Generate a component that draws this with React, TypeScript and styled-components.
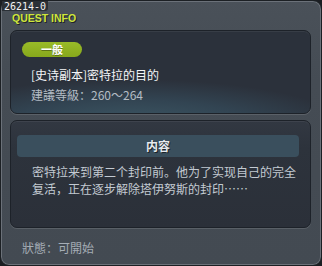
import * as React from 'react';
import styled, { createGlobalStyle } from 'styled-components';

const GlobalStyle = createGlobalStyle`
  html, body {
    margin: 0;
    padding: 0;
    background: #1b1e22;
  }
`;

const cjk = `"Noto Sans CJK SC", "Noto Sans CJK TC", "Noto Sans", sans-serif`;

const Frame = styled.div`
  position: relative;
  box-sizing: border-box;
  width: 322px;
  height: 266px;
  padding: 11px 10px 0 9px;
  display: flex;
  flex-direction: column;
  border: 1px solid #1c2024;
  border-radius: 9px;
  background: linear-gradient(180deg, #4a5159 0%, #454c54 30%, #434a52 100%);
  box-shadow: inset 0 0 0 1px #6b7179;
  font-family: ${cjk};
`;

const QuestId = styled.div`
  position: absolute;
  left: 1px;
  top: 0;
  padding: 0 2px;
  height: 10px;
  line-height: 10px;
  background: #2b3036;
  border-radius: 0 0 3px 0;
  color: #f2f2f2;
  font: 10px "DejaVu Sans Mono", monospace;
`;

const Heading = styled.div`
  height: 11px;
  line-height: 11px;
  margin: 0 0 7px 2px;
  color: #cfe63c;
  font: bold 10.5px "Liberation Sans", Arial, sans-serif;
  text-shadow: 1px 1px 0 #1e2326;
`;

const Panel = styled.section<{ $tone: 'glow' | 'flat' }>`
  box-sizing: border-box;
  border: 1px solid #1d2229;
  border-radius: 7px;
  box-shadow: inset 0 1px 0 rgba(255, 255, 255, 0.06), 0 1px 0 rgba(255, 255, 255, 0.12);
  background: ${({ $tone }) =>
    $tone === 'glow'
      ? 'radial-gradient(ellipse 90% 70% at 40% 115%, #3d5865 0%, #324452 45%, rgba(43,49,59,0) 80%), #2b313b'
      : 'linear-gradient(180deg, #323842 0%, #2d333c 25%, #2b3039 100%)'};
`;

const InfoPanel = styled(Panel)`
  height: 84px;
  padding: 11px 12px 0 11px;
`;

const ContentPanel = styled(Panel)`
  height: 108px;
  margin-top: 6px;
  padding: 14px 11px 0 6px;
`;

const Badge = styled.div`
  width: 60px;
  height: 15px;
  border-radius: 8px;
  background: linear-gradient(180deg, #99bb28 0%, #87a81c 100%);
  color: #ffffff;
  font: bold 11px/15px ${cjk};
  text-align: center;
  text-shadow: 0 1px 0 rgba(0, 0, 0, 0.35);
`;

const QuestTitle = styled.div`
  margin: 10px 0 0 9px;
  color: #f4f6f8;
  font-size: 12px;
  line-height: 16px;
`;

const Level = styled.div`
  margin: 4px 0 0 9px;
  color: #b4bcc4;
  font-size: 12px;
  line-height: 16px;
`;

const SectionBar = styled.div`
  height: 22px;
  border-radius: 4px;
  background: #3a4f5d;
  color: #e6eaee;
  font: bold 12px/22px ${cjk};
  text-align: center;
  text-shadow: 1px 1px 0 #1a2228;
`;

const Description = styled.p`
  margin: 6px 0 0 15px;
  width: 268px;
  color: #c3cad2;
  font-size: 12px;
  line-height: 17px;
`;

const Status = styled.div`
  margin: 12px 0 0 12px;
  color: #a5adb5;
  font-size: 12px;
  line-height: 16px;
`;

export default function App() {
  return (
    <>
      <GlobalStyle />
      <Frame>
        <QuestId>26214-0</QuestId>
        <Heading>QUEST INFO</Heading>
        <InfoPanel $tone="glow">
          <Badge>一般</Badge>
          <QuestTitle>[史诗副本]密特拉的目的</QuestTitle>
          <Level>建議等級：260～264</Level>
        </InfoPanel>
        <ContentPanel $tone="flat">
          <SectionBar>内容</SectionBar>
          <Description>
            密特拉来到第二个封印前。他为了实现自己的完全复活，正在逐步解除塔伊努斯的封印……
          </Description>
        </ContentPanel>
        <Status>狀態：可開始</Status>
      </Frame>
    </>
  );
}
